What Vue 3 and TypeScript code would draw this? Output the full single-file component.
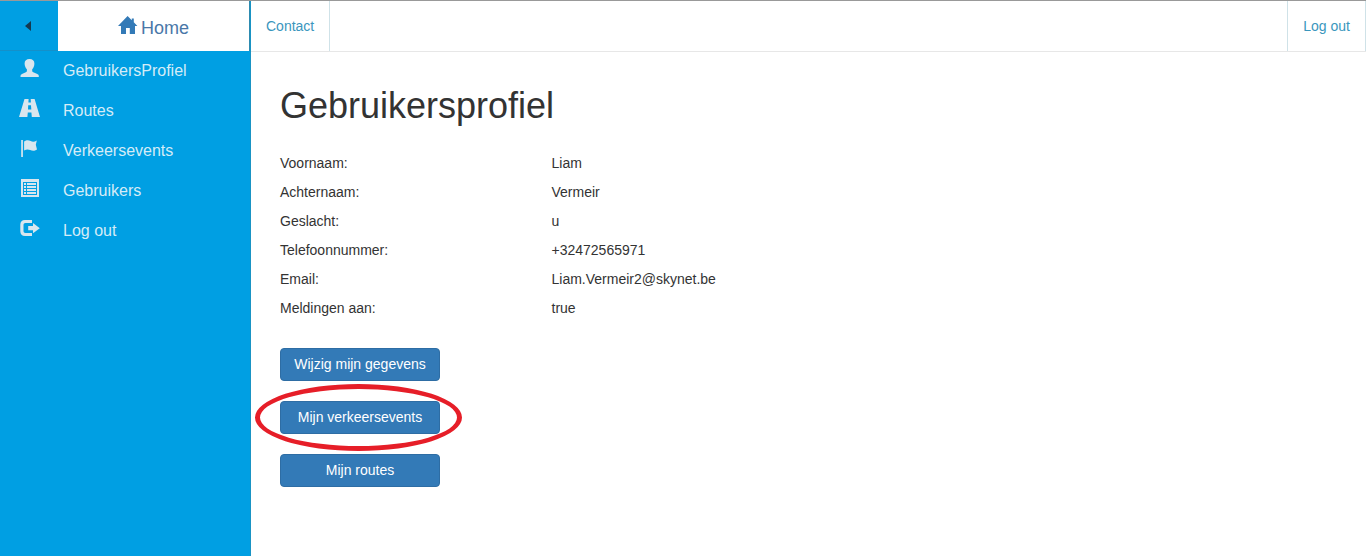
<script setup lang="ts">
interface MenuItem {
  label: string
  icon: string
}

interface Field {
  label: string
  value: string
}

const menu: MenuItem[] = [
  {
    label: 'GebruikersProfiel',
    icon: 'M9.5 1C6.4 1 4.6 2.7 4.6 5.5C4.6 7.9 5.6 10.1 6.9 11.3V12.9C6.9 13.6 6.5 14 5.8 14.3L2 16C1 16.5 .5 17.1 .5 18V19H18.8V18C18.8 17.1 18.3 16.5 17.3 16L13.3 14.3C12.6 14 12.2 13.6 12.2 12.9V11.3C13.5 10.1 14.4 7.9 14.4 5.5C14.4 2.7 12.6 1 9.5 1Z',
  },
  {
    label: 'Routes',
    icon: 'M4.5 1H8.6L8.4 4.5H10.9L10.7 1H14.6L20 19H11.8L11.4 14.5H7.8L7.4 19H-1ZM8.2 7.2L8 11.4H11.3L11 7.2Z',
  },
  {
    label: 'Verkeersevents',
    icon: 'M1.2 2H2.9V19H1.2ZM4.1 3.6C6.5 1.8 8.5 2 10.7 3.1C12.6 4.1 14.5 4 16.8 2.5L15.8 6.7L17 11.4C14.5 13.2 12.4 13 10.2 12C8 11 6.2 11.3 4.1 12.4Z',
  },
  {
    label: 'Gebruikers',
    icon: 'M1 1H19V19H1ZM3 4V17H17V4ZM4 5H6V7H4ZM7 5H16V7H7ZM4 8H6V10H4ZM7 8H16V10H7ZM4 11H6V13H4ZM7 11H16V13H7ZM4 14H6V16H4ZM7 14H16V16H7Z',
  },
  {
    label: 'Log out',
    icon: 'M5 2H12V5H5.5C4.2 5 3.5 5.7 3.5 7V13C3.5 14.3 4.2 15 5.5 15H12V18H5C2 18 .3 16.3 .3 13.3V6.7C.3 3.7 2 2 5 2ZM13 5L19.8 10.2L13 15.2V12.3H8.2V8H13Z',
  },
]

const fields: Field[] = [
  { label: 'Voornaam:', value: 'Liam' },
  { label: 'Achternaam:', value: 'Vermeir' },
  { label: 'Geslacht:', value: 'u' },
  { label: 'Telefoonnummer:', value: '+32472565971' },
  { label: 'Email:', value: 'Liam.Vermeir2@skynet.be' },
  { label: 'Meldingen aan:', value: 'true' },
]
</script>

<template>
  <div class="app">
    <aside class="sidebar">
      <div class="brand">
        <button class="collapse" type="button" aria-label="Menu inklappen">
          <svg width="6" height="10" viewBox="0 0 6 10"><path d="M6 0V10L0 5Z" /></svg>
        </button>
        <a class="home" href="#">
          <svg width="20" height="20" viewBox="0 0 20 20">
            <path d="M9.6 1L13.8 5.2V3.5H15.8V7.2L19.4 11H17V19H11.8V13H8V19H3V11H0Z" />
          </svg>
          <span>Home</span>
        </a>
      </div>
      <nav class="menu">
        <a v-for="item in menu" :key="item.label" class="menu-item" href="#">
          <svg width="20" height="20" viewBox="0 0 20 20" overflow="visible">
            <path :d="item.icon" fill-rule="evenodd" />
          </svg>
          <span>{{ item.label }}</span>
        </a>
      </nav>
    </aside>
    <div class="page">
      <header class="topbar">
        <a class="contact" href="#">Contact</a>
        <a class="logout" href="#">Log out</a>
      </header>
      <main class="content">
        <h1>Gebruikersprofiel</h1>
        <dl class="fields">
          <div v-for="field in fields" :key="field.label" class="field">
            <dt>{{ field.label }}</dt>
            <dd>{{ field.value }}</dd>
          </div>
        </dl>
        <div class="actions">
          <button class="btn" type="button">Wijzig mijn gegevens</button>
          <div class="marked">
            <button class="btn" type="button">Mijn verkeersevents</button>
            <span class="ring" aria-hidden="true"></span>
          </div>
          <button class="btn" type="button">Mijn routes</button>
        </div>
      </main>
    </div>
  </div>
</template>

<style>
body {
  margin: 0;
  background: #fff;
}
</style>

<style scoped>
* {
  box-sizing: border-box;
}

a {
  text-decoration: none;
}

svg {
  display: block;
  fill: currentColor;
}

.app {
  display: flex;
  min-height: 100vh;
  border-top: 1px solid #999;
  font: 14px/20px "Liberation Sans", Arial, sans-serif;
  color: #333;
}

.sidebar {
  flex: 0 0 251px;
  background: #009fe3;
  border-right: 1px solid #1993c4;
}

.brand {
  display: flex;
  height: 50px;
}

.collapse {
  display: flex;
  align-items: center;
  justify-content: center;
  width: 58px;
  padding: 0 2px 0 0;
  border: 0;
  border-bottom: 1px solid #1590c9;
  background: transparent;
  color: #15394f;
}

.home {
  display: flex;
  flex: 1;
  align-items: center;
  justify-content: center;
  gap: 3px;
  padding-top: 3px;
  border-right: 1px solid #2d8bb0;
  background: #fff;
  color: #337ab7;
  font-size: 18px;
}

.home svg {
  margin-bottom: 6px;
}

.home span {
  color: #4a77a8;
}

.menu-item {
  display: flex;
  align-items: center;
  gap: 23px;
  height: 40px;
  padding-left: 20px;
  color: #d5ecf7;
  font-size: 16px;
}

.menu-item svg {
  margin-bottom: 6px;
  color: #d9e6ee;
}

.page {
  flex: 1;
  min-width: 0;
}

.topbar {
  display: flex;
  justify-content: space-between;
  height: 51px;
  border-bottom: 1px solid #e7e7e7;
}

.topbar a {
  padding: 15px;
  color: #3a96bd;
}

.contact {
  border-right: 1px solid #cfe2e8;
}

.topbar .logout {
  border-left: 1px solid #cfe2e8;
  border-right: 1px solid #cfe2e8;
}

.content {
  padding: 34px 0 34px 29px;
}

h1 {
  margin: 0 0 28px;
  font-size: 36px;
  font-weight: 400;
  line-height: 39px;
}

.fields {
  display: grid;
  gap: 9px;
  margin: 0;
}

.field {
  display: grid;
  grid-template-columns: 1fr 3fr;
}

dd {
  margin: 0;
}

.actions {
  display: flex;
  flex-direction: column;
  align-items: flex-start;
  gap: 20px;
  margin-top: 30px;
}

.btn {
  display: block;
  width: 160px;
  padding: 6px 0;
  border: 1px solid #2e6da4;
  border-radius: 4px;
  background: #337ab7;
  color: #fff;
  font: 14px/19px "Liberation Sans", Arial, sans-serif;
}

.marked {
  position: relative;
}

.ring {
  position: absolute;
  inset: -17px -22px -17px -25px;
  border: 5px solid #e61e28;
  border-radius: 50%;
  pointer-events: none;
}
</style>
